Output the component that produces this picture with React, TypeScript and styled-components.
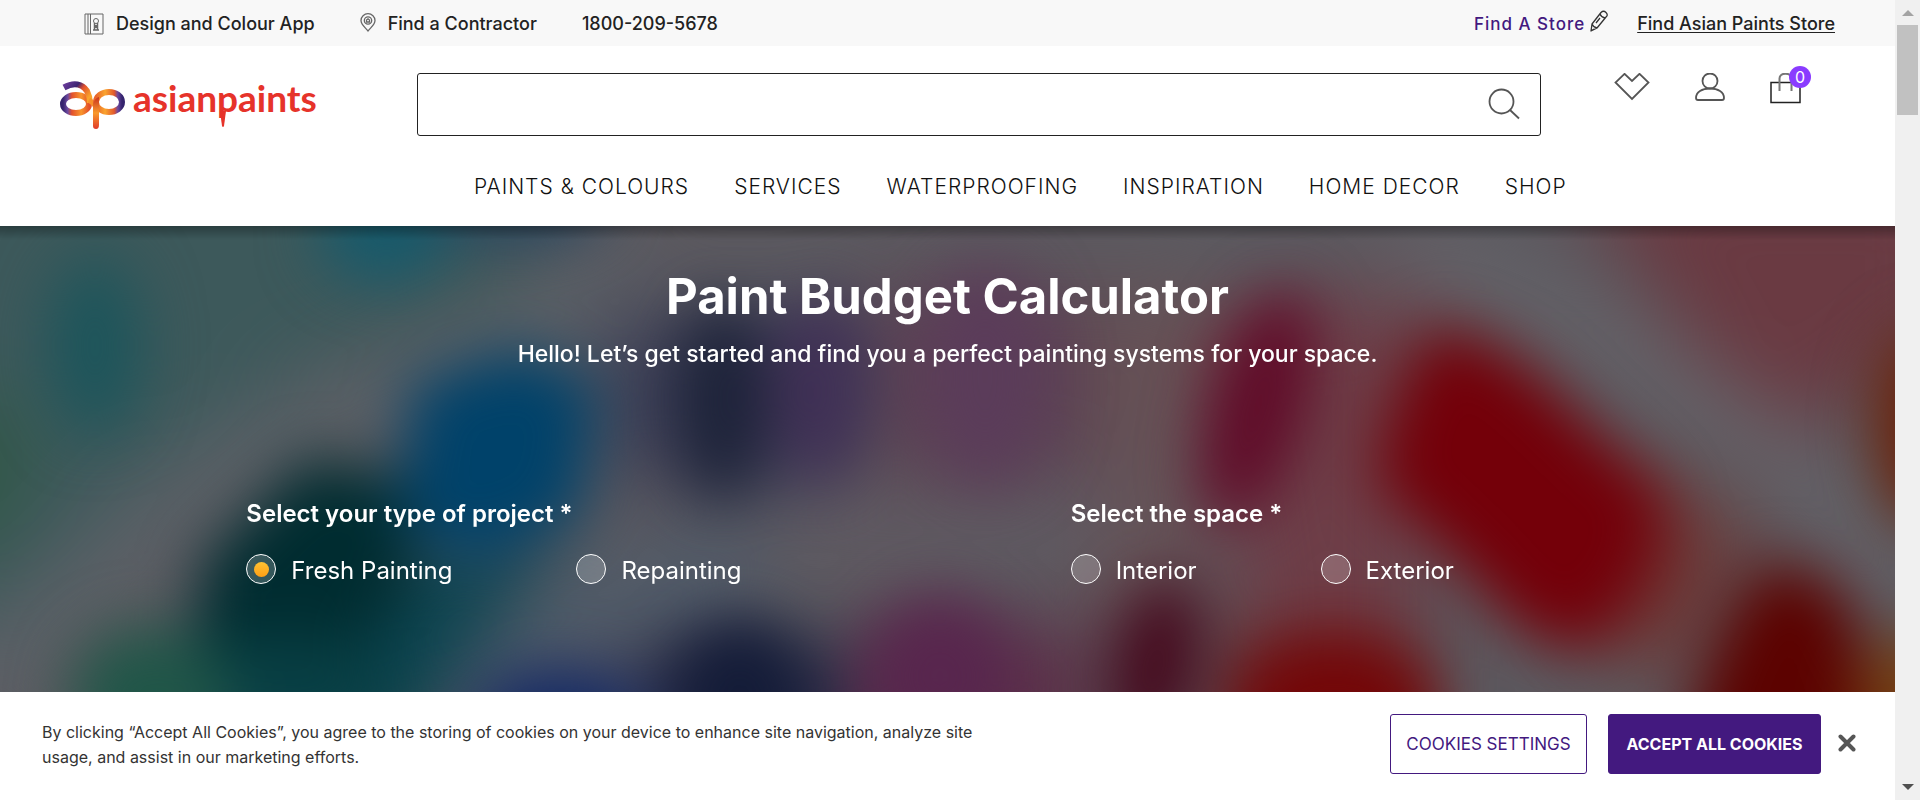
import React, { useState } from 'react';
import styled, { createGlobalStyle } from 'styled-components';

const GlobalStyle = createGlobalStyle`
  *, *::before, *::after { box-sizing: border-box; }
  html, body { margin: 0; padding: 0; }
  body {
    background: #fff;
    color: #222;
    font-family: Inter, "Open Sans", sans-serif;
    font-size: 18px;
  }
  a { color: inherit; text-decoration: none; }
  button { font-family: inherit; cursor: pointer; }
  svg { display: block; }
`;

const Shell = styled.div`
  display: grid;
  grid-template-columns: minmax(0, 1fr) 25px;
  height: 100vh;
`;

const Page = styled.div`
  display: flex;
  flex-direction: column;
  min-height: 0;
`;

const TopBar = styled.div`
  display: flex;
  align-items: center;
  justify-content: space-between;
  height: 46px;
  padding: 1px 60px 0 84px;
  background: #f8f8f8;
  font-weight: 500;
`;

const TopGroup = styled.div<{ $gap: number }>`
  display: flex;
  align-items: center;
  gap: ${(p) => p.$gap}px;
`;

const TopLink = styled.a`
  display: flex;
  align-items: center;
  gap: 12px;
  line-height: 24px;
  white-space: nowrap;
`;

const StoreLink = styled(TopLink)`
  gap: 5px;
  color: #43197f;
  font-size: 17px;
  letter-spacing: 1px;
`;

const UnderlinedLink = styled(TopLink)`
  text-decoration: underline;
  text-underline-offset: 2px;
  text-decoration-thickness: 1px;
`;

const Header = styled.header`
  display: grid;
  grid-template-columns: 22% minmax(0, 1fr) 354px;
  padding: 27px 0 26px;
`;

const LogoLink = styled.a`
  padding: 1px 0 0 56px;
`;

const SearchBox = styled.form`
  display: flex;
  align-items: center;
  height: 63px;
  padding-right: 20px;
  border: 1px solid #222;
  border-radius: 3px;
`;

const SearchInput = styled.input`
  flex: 1;
  min-width: 0;
  height: 100%;
  padding: 0 20px;
  border: 0;
  outline: 0;
  background: transparent;
  font: inherit;
`;

const IconButton = styled.button`
  position: relative;
  display: flex;
  padding: 0;
  border: 0;
  background: none;
`;

const Actions = styled.div`
  display: flex;
  align-items: flex-start;
  gap: 45px;
  padding-left: 73px;
`;

const Badge = styled.span`
  position: absolute;
  top: -7px;
  right: -10px;
  width: 22px;
  height: 22px;
  border-radius: 50%;
  background: #8a3bff;
  color: #fff;
  font-size: 16px;
  line-height: 22px;
  text-align: center;
`;

const Nav = styled.nav`
  grid-column: 2 / 4;
  display: flex;
  gap: 45px;
  padding: 37px 0 0 57px;
`;

const NavLink = styled.a`
  font-size: 21px;
  font-weight: 300;
  line-height: 27px;
  letter-spacing: 1px;
  color: #111;
  white-space: nowrap;
`;

const Hero = styled.main`
  position: relative;
  flex: 1;
  min-height: 0;
  overflow: hidden;
  background: #5c5a60;
  color: #fff;
`;

const Backdrop = styled.svg`
  position: absolute;
  inset: 0;
  width: 100%;
  height: 100%;
`;

const HeroShade = styled.div`
  position: absolute;
  inset: 0 0 auto;
  height: 14px;
  background: linear-gradient(rgba(0, 0, 0, 0.3), rgba(0, 0, 0, 0));
`;

const HeroContent = styled.div`
  position: relative;
  padding-top: 41px;
`;

const Title = styled.h1`
  margin: 0;
  font-size: 49px;
  font-weight: 700;
  line-height: 60px;
  text-align: center;
`;

const Subtitle = styled.p`
  margin: 11px 0 0;
  font-size: 23px;
  font-weight: 500;
  line-height: 32px;
  text-align: center;
`;

const Questions = styled.form`
  display: grid;
  grid-template-columns: 1fr 1fr;
  margin-top: 128px;
  padding-left: 13%;
`;

const Question = styled.fieldset`
  min-width: 0;
  margin: 0;
  padding: 0;
  border: 0;
`;

const Legend = styled.legend`
  padding: 0;
  font-size: 24px;
  font-weight: 600;
  line-height: 32px;
`;

const Options = styled.div`
  display: flex;
  gap: 124px;
  padding-top: 24px;
`;

const Option = styled.label`
  display: flex;
  gap: 15px;
  font-size: 24px;
  line-height: 34px;
  cursor: pointer;
`;

const Radio = styled.input`
  appearance: none;
  display: grid;
  place-items: center;
  width: 30px;
  height: 30px;
  margin: 0;
  border: 1px solid #fff;
  border-radius: 50%;
  background: rgba(255, 255, 255, 0.2);

  &:checked::before {
    content: '';
    width: 15px;
    height: 15px;
    border-radius: 50%;
    background: linear-gradient(#ffc233, #ff9f14);
  }
`;

const CookieBar = styled.section`
  display: flex;
  align-items: flex-start;
  height: 108px;
  padding: 22px 39px 0 42px;
  background: #fff;
`;

const CookieText = styled.p`
  flex: 0 1 960px;
  margin: 6px auto 0 0;
  color: #333;
  font-size: 16px;
  line-height: 25px;
`;

const CookieButton = styled.button<{ $primary?: boolean }>`
  height: 60px;
  width: ${(p) => (p.$primary ? 213 : 197)}px;
  margin-left: ${(p) => (p.$primary ? 21 : 0)}px;
  padding: 0;
  border: 1px solid #43197f;
  border-radius: 3px;
  background: ${(p) => (p.$primary ? '#43197f' : '#fff')};
  color: ${(p) => (p.$primary ? '#fff' : '#43197f')};
  font-size: ${(p) => (p.$primary ? 16 : 17)}px;
  font-weight: ${(p) => (p.$primary ? 700 : 400)};
  white-space: nowrap;
`;

const CloseButton = styled(IconButton)`
  margin: 20px 0 0 17px;
`;

const ScrollTrack = styled.div`
  display: flex;
  flex-direction: column;
  align-items: center;
  padding: 10px 0;
  background: #f0f0f0;
`;

const ScrollThumb = styled.div`
  width: 21px;
  height: 90px;
  margin: 9px 0 auto;
  background: #c1c1c1;
`;

const Arrow = styled.span<{ $down?: boolean }>`
  border: 6px solid transparent;
  border-top: ${(p) => (p.$down ? '6px solid #505050' : '0')};
  border-bottom: ${(p) => (p.$down ? '0' : '6px solid #a3a3a3')};
`;

const Logo = () => (
  <svg width="280" height="60" viewBox="0 -4 280 60" role="img" aria-label="asianpaints">
    <defs>
      <linearGradient id="ringA" x1="0" x2="1">
        <stop offset="0" stopColor="#35246e" />
        <stop offset="0.18" stopColor="#6d4aa0" />
        <stop offset="0.34" stopColor="#e2502c" />
        <stop offset="0.7" stopColor="#f9962c" />
        <stop offset="1" stopColor="#e2502c" />
      </linearGradient>
      <linearGradient id="ringP" x1="0" x2="1">
        <stop offset="0" stopColor="#e8642a" />
        <stop offset="0.35" stopColor="#faa42e" />
        <stop offset="0.7" stopColor="#e2582c" />
        <stop offset="0.84" stopColor="#6a48a0" />
        <stop offset="1" stopColor="#35246e" />
      </linearGradient>
      <linearGradient id="swoosh" x1="0" x2="1" y1="0" y2="0.6">
        <stop offset="0" stopColor="#6a3c9a" />
        <stop offset="0.4" stopColor="#3c2472" />
        <stop offset="0.62" stopColor="#e2502c" />
        <stop offset="1" stopColor="#f9a42c" />
      </linearGradient>
      <linearGradient id="stem" x1="0" x2="0" y1="0" y2="1">
        <stop offset="0" stopColor="#c8321e" />
        <stop offset="0.5" stopColor="#f99a2c" />
        <stop offset="1" stopColor="#e03a2a" />
      </linearGradient>
    </defs>
    <ellipse cx="20" cy="26" rx="13" ry="9" fill="none" stroke="url(#ringA)" strokeWidth="6" />
    <path d="M8 9.500C18 4 26 6 31 13c2 4 3 8 3 12" fill="none" stroke="url(#swoosh)" strokeWidth="6" />
    <path d="M33 22q5 3 8 8" fill="none" stroke="#f7902a" strokeWidth="5" />
    <ellipse cx="53" cy="24" rx="13" ry="10" fill="none" stroke="url(#ringP)" strokeWidth="6" />
    <path d="M37 26q2-6 6-7v28q0 4-3 4t-3-3Z" fill="url(#stem)" />
    <g fill="#e6332a">
      <text y="34" fontFamily="Lato, sans-serif" fontWeight="700" fontSize="37">
        <tspan x="77">asian</tspan>
        <tspan x="161">paints</tspan>
      </text>
      <path d="M164 33h6l-2 15q-1 2-2 0Z" />
    </g>
  </svg>
);

const SwatchIcon = () => (
  <svg width="20" height="22" viewBox="0 0 20 22" fill="none" stroke="#666" aria-hidden="true">
    <path d="M1 1h18v20H1ZM4 1v20M6.500 1v20" />
    <circle cx="12" cy="8" r="2.500" />
    <path d="M10.500 10v7h3v-7M9 17h6M12 12v3" strokeWidth="1.500" />
  </svg>
);

const PinIcon = () => (
  <svg width="16" height="22" viewBox="0 0 16 22" fill="none" stroke="#666" strokeWidth="1.300" aria-hidden="true">
    <path d="M8 18C6 15 1 12 1 7.500a7 6.800 0 0 1 14 0C15 12 10 15 8 18Z" />
    <circle cx="8" cy="7.500" r="3.700" />
    <path d="M6.500 9V7L8 5.800 9.500 7v2Z" />
  </svg>
);

const PencilIcon = () => (
  <svg width="18" height="28" viewBox="0 0 18 28" fill="none" stroke="#333" strokeWidth="1.300" strokeLinejoin="round" aria-hidden="true">
    <path d="M1 21l1-7L11 2.500q2.500-2.500 5 0t0 4.500L7 18ZM2 14q1 3 5 4M10 4q1 3 5 4M1 21l3-2M6 13l4-5" />
  </svg>
);

const SearchIcon = () => (
  <svg width="32" height="34" viewBox="0 0 32 34" fill="none" stroke="#555" strokeWidth="1.800" aria-hidden="true">
    <circle cx="13.500" cy="13.500" r="12" />
    <path d="M22 22l9 8.500" />
  </svg>
);

const HeartIcon = () => (
  <svg width="36" height="29" viewBox="0 0 36 29" fill="none" stroke="#555" strokeWidth="1.800" aria-hidden="true">
    <path d="M10.500 0.800L1.500 9.500 18 26 34.500 9.500 25.500 0.800 18 8Z" />
  </svg>
);

const UserIcon = () => (
  <svg width="30" height="30" viewBox="0 0 30 30" fill="none" stroke="#555" strokeWidth="1.800" aria-hidden="true">
    <circle cx="15" cy="8" r="7.500" />
    <path d="M3 27q-2 0-2-2C1 19 7 15.500 15 15.500S29 19 29 25q0 2-2 2Z" />
  </svg>
);

const BagIcon = () => (
  <svg width="31" height="33" viewBox="0 0 31 33" fill="none" aria-hidden="true">
    <path d="M1 9.500h29v20H1Z" stroke="#222" strokeWidth="1.500" />
    <path d="M9.500 18V5.500c0-6.500 12-6.500 12 0V18" stroke="#777" strokeWidth="2" />
  </svg>
);

const CloseIcon = () => (
  <svg width="18" height="18" viewBox="0 0 18 18" stroke="#565656" strokeWidth="4" strokeLinecap="round" aria-hidden="true">
    <path d="M2.500 2.500l13 13M15.500 2.500l-13 13" />
  </svg>
);

const HeroBackdrop = () => (
  <Backdrop viewBox="0 0 1895 466" preserveAspectRatio="none" aria-hidden="true">
    <defs>
      <filter id="soft" x="-20%" y="-40%" width="140%" height="180%" colorInterpolationFilters="sRGB">
        <feGaussianBlur stdDeviation="30" />
      </filter>
      <filter id="wide" x="-20%" y="-40%" width="140%" height="180%" colorInterpolationFilters="sRGB">
        <feGaussianBlur stdDeviation="40" />
      </filter>
    </defs>
    <g filter="url(#wide)">
      <path d="M-100-100H560L520 60 300 150 140 250-20 400H-100Z" fill="#3d595b" />
      <path d="M-80 180H30L0 320H-80Z" fill="#2f5844" />
      <path d="M-40 480L90 350 230 230 520 120 620 40" stroke="#5c6268" strokeWidth="70" fill="none" />
      <path d="M470 480L560 390 760 340" stroke="#505c6a" strokeWidth="90" fill="none" />
      <path d="M600 90H850L800 270 600 250Z" fill="#3c3e56" />
      <path d="M860 60H1120V250H860Z" fill="#5c4252" />
      <path d="M1090 60H1200V420H1090Z" fill="#665256" />
      <path d="M1200 90L1420 60V440H1250Z" fill="#6e3e48" />
      <path d="M780 310L1120 290" stroke="#605a62" strokeWidth="70" />
      <path d="M1560-60H1960V90L1810 210 1700 130Z" fill="#6a3a42" />
      <path d="M1400 20L1620 120 1790 230 1900 380" stroke="#66646a" strokeWidth="60" fill="none" />
      <path d="M1620 240L1760 300 1680 460 1560 400Z" fill="#6e3836" />
      <path d="M200 460L330 330 560 300 480 420 420 520H200Z" fill="#0c4450" />
      <path d="M630 420H860V540H630Z" fill="#2a2c48" />
      <path d="M860 400H1100V540H860Z" fill="#5c3048" />
      <path d="M1220 410H1420V540H1220Z" fill="#6c2024" />
    </g>
    <g filter="url(#soft)">
      <ellipse cx="95" cy="120" rx="46" ry="90" fill="#1c555b" />
      <ellipse cx="385" cy="5" rx="66" ry="50" fill="#155a6c" />
      <ellipse cx="520" cy="-25" rx="90" ry="40" fill="#2a4660" />
      <path d="M310 230L420 260 410 370 330 450 200 450 200 340Z" fill="#002c30" />
      <path d="M410 160L520 120 600 160 580 290 480 340 400 300Z" fill="#00426a" />
      <ellipse cx="290" cy="460" rx="110" ry="50" fill="#083f44" />
      <ellipse cx="150" cy="470" rx="80" ry="70" fill="#205648" />
      <ellipse cx="560" cy="495" rx="90" ry="55" fill="#142a66" />
      <ellipse cx="722" cy="175" rx="44" ry="100" fill="#1c2238" />
      <ellipse cx="740" cy="470" rx="70" ry="75" fill="#141c38" />
      <ellipse cx="820" cy="165" rx="50" ry="95" fill="#403056" />
      <ellipse cx="985" cy="150" rx="65" ry="110" fill="#5b3c5a" />
      <ellipse cx="940" cy="450" rx="75" ry="80" fill="#58264e" />
      <ellipse cx="1258" cy="180" rx="46" ry="120" transform="rotate(16 1258 180)" fill="#600a28" />
      <ellipse cx="1155" cy="440" rx="46" ry="90" transform="rotate(12 1155 440)" fill="#460a1e" />
      <ellipse cx="1335" cy="485" rx="100" ry="70" fill="#740607" />
      <path d="M1430 100Q1500 105 1570 180L1660 265Q1680 330 1600 415Q1540 440 1470 350L1375 260Q1380 180 1430 100Z" fill="#740009" />
      <ellipse cx="1925" cy="200" rx="50" ry="100" fill="#6c2006" />
      <path d="M1760 340Q1830 330 1860 400V540H1680Q1700 420 1760 340Z" fill="#5c0200" />
      <ellipse cx="1915" cy="480" rx="60" ry="70" fill="#744012" />
    </g>
  </Backdrop>
);

const NAV_ITEMS = ['PAINTS & COLOURS', 'SERVICES', 'WATERPROOFING', 'INSPIRATION', 'HOME DECOR', 'SHOP'];

const QUESTIONS = [
  { name: 'project', label: 'Select your type of project *', options: ['Fresh Painting', 'Repainting'] },
  { name: 'space', label: 'Select the space *', options: ['Interior', 'Exterior'] },
];

export default function App() {
  const [answers, setAnswers] = useState<Record<string, string>>({ project: 'Fresh Painting' });

  return (
    <>
      <GlobalStyle />
      <Shell>
        <Page>
          <TopBar>
            <TopGroup $gap={45}>
              <TopLink href="#app"><SwatchIcon />Design and Colour App</TopLink>
              <TopLink href="#contractor"><PinIcon />Find a Contractor</TopLink>
              <TopLink href="tel:18002095678">1800-209-5678</TopLink>
            </TopGroup>
            <TopGroup $gap={29}>
              <StoreLink href="#store">Find A Store<PencilIcon /></StoreLink>
              <UnderlinedLink href="#asian-paints-store">Find Asian Paints Store</UnderlinedLink>
            </TopGroup>
          </TopBar>
          <Header>
            <LogoLink href="#home"><Logo /></LogoLink>
            <SearchBox role="search" onSubmit={(e) => e.preventDefault()}>
              <SearchInput type="text" aria-label="Search" />
              <IconButton type="submit" aria-label="Search"><SearchIcon /></IconButton>
            </SearchBox>
            <Actions>
              <IconButton type="button" aria-label="Wishlist"><HeartIcon /></IconButton>
              <IconButton type="button" aria-label="Account"><UserIcon /></IconButton>
              <IconButton type="button" aria-label="Cart"><BagIcon /><Badge>0</Badge></IconButton>
            </Actions>
            <Nav>
              {NAV_ITEMS.map((item) => <NavLink key={item} href="#">{item}</NavLink>)}
            </Nav>
          </Header>
          <Hero>
            <HeroBackdrop />
            <HeroShade />
            <HeroContent>
              <Title>Paint Budget Calculator</Title>
              <Subtitle>Hello! Let’s get started and find you a perfect painting systems for your space.</Subtitle>
              <Questions>
                {QUESTIONS.map((q) => (
                  <Question key={q.name}>
                    <Legend>{q.label}</Legend>
                    <Options>
                      {q.options.map((option) => (
                        <Option key={option}>
                          <Radio
                            type="radio"
                            name={q.name}
                            checked={answers[q.name] === option}
                            onChange={() => setAnswers({ ...answers, [q.name]: option })}
                          />
                          {option}
                        </Option>
                      ))}
                    </Options>
                  </Question>
                ))}
              </Questions>
            </HeroContent>
          </Hero>
          <CookieBar aria-label="Cookie notice">
            <CookieText>
              By clicking “Accept All Cookies”, you agree to the storing of cookies on your device to enhance site navigation, analyze site usage, and assist in our marketing efforts.
            </CookieText>
            <CookieButton type="button">COOKIES SETTINGS</CookieButton>
            <CookieButton type="button" $primary>ACCEPT ALL COOKIES</CookieButton>
            <CloseButton type="button" aria-label="Close"><CloseIcon /></CloseButton>
          </CookieBar>
        </Page>
        <ScrollTrack aria-hidden="true">
          <Arrow />
          <ScrollThumb />
          <Arrow $down />
        </ScrollTrack>
      </Shell>
    </>
  );
}
